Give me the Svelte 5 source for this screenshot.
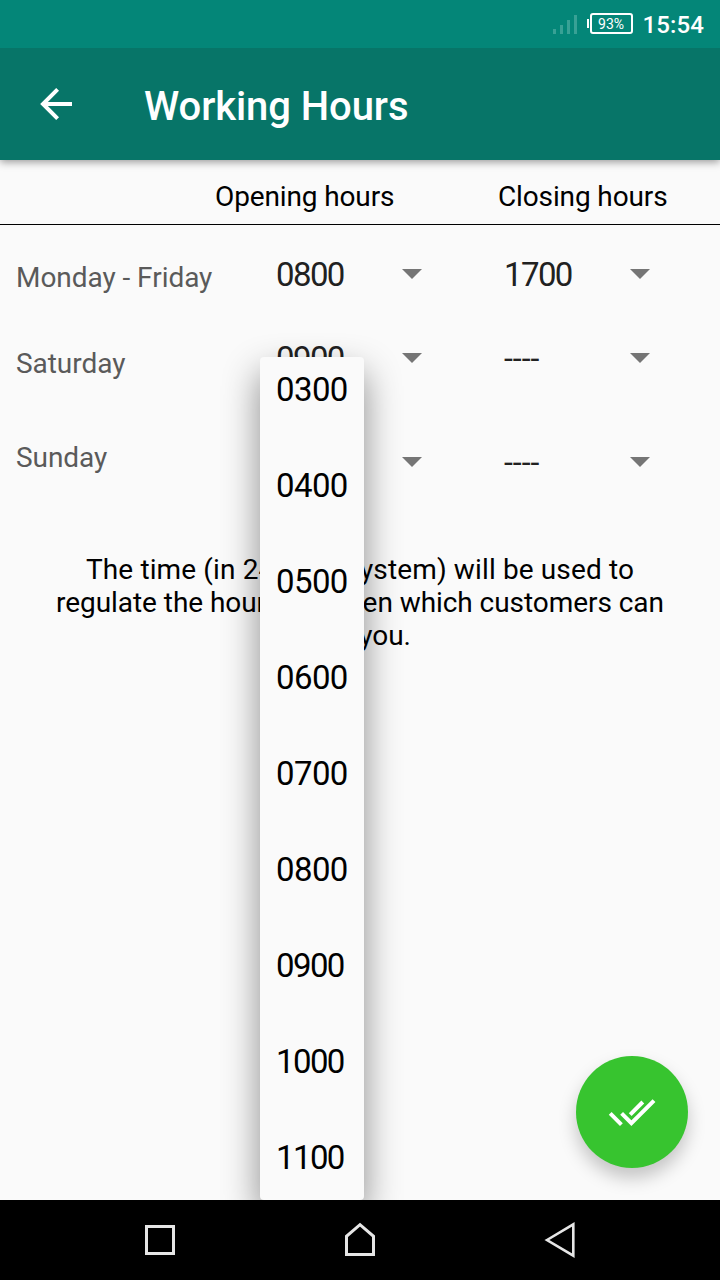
<script>
  const rows = [
    { day: 'Monday - Friday', open: '0800', close: '1700' },
    { day: 'Saturday', open: '0900', close: '----' },
    { day: 'Sunday', open: '----', close: '----' }
  ];
  const options = ['0300', '0400', '0500', '0600', '0700', '0800', '0900', '1000', '1100'];
  const narrow = ['0900', '1000', '1100'];
</script>

{#snippet spinner(value)}
  <div class="spinner">
    <span class="value" class:dashes={value === '----'}>{value}</span>
    <svg width="20" height="10" viewBox="0 0 20 10"><path d="M0 0H20L10 10Z" fill="#757575" /></svg>
  </div>
{/snippet}

<div class="screen">
  <div class="status">
    <svg class="signal" width="26" height="20" viewBox="0 0 26 20" fill="#38a195">
      <path d="M0 14h3v5H0zM7 10h3v9H7zM14 5h3v14h-3zM21 0h3v19h-3z" />
    </svg>
    <div class="battery"><span>93%</span></div>
    <span class="clock">15:54</span>
  </div>
  <header>
    <svg width="32" height="32" viewBox="0 0 32 32" fill="none" stroke="#fff" stroke-width="4">
      <path d="M32 16H3M17.6 1.4L3 16l14.6 14.6" />
    </svg>
    <h1>Working Hours</h1>
  </header>
  <main>
    <div class="heads"><span class="oh">Opening hours</span><span class="ch">Closing hours</span></div>
    <div class="rows">
      {#each rows as row}
        <div class="row">
          <span class="day">{row.day}</span>
          {@render spinner(row.open)}
          {@render spinner(row.close)}
        </div>
      {/each}
    </div>
    <p><span class="wide">The time (in 24 hour system) will be used to</span><br />regulate the hours between which customers can<br />call you.</p>
    <div class="clip">
      <div class="menu">
        {#each options as option}
          <div class="option" class:narrow={narrow.includes(option)}>{option}</div>
        {/each}
      </div>
    </div>
    <button class="fab" aria-label="Save">
      <svg width="48" height="48" viewBox="0 0 24 24" fill="none" stroke="#fff" stroke-width="2">
        <path d="M1.1 12.7l5.6 5.6M6.8 12.7l4.9 4.9L23 6.3M11.1 13.3l6.3-6.3" />
      </svg>
    </button>
  </main>
  <nav>
    <svg width="200" height="80" viewBox="60 1200 200 80"><rect x="146.5" y="1226.5" width="27" height="27" /></svg>
    <svg width="200" height="80" viewBox="260 1200 200 80"><path d="M346.5 1254.5v-18.2l13.5-11.6 13.5 11.6v18.2z" /></svg>
    <svg width="200" height="80" viewBox="460 1200 200 80"><path d="M547 1240l26.3-15.6v31.2z" stroke-width="2.6" /></svg>
  </nav>
</div>

<style>
  :global(body) { margin: 0; }
  .screen {
    width: 720px; height: 1280px; overflow: hidden; display: flex; flex-direction: column;
    background: #fafafa; font-family: Roboto, sans-serif; color: #000;
  }
  .status {
    height: 48px; flex: none; background: #048678; color: #fff; display: flex;
    align-items: center; justify-content: flex-end; padding-right: 16px; box-sizing: border-box;
  }
  .signal { margin-right: 8px; margin-top: 2px; }
  .battery { width: 46px; height: 21px; display: flex; align-items: center; margin-top: -1px; }
  .battery::before { content: ''; width: 2px; height: 9px; background: #fff; margin-right: 1px; }
  .battery span {
    box-sizing: border-box; width: 43px; height: 21px; border: 2px solid #fff; border-radius: 3px;
    font-size: 14px; line-height: 18px; text-align: center;
  }
  .clock { font-size: 24px; font-weight: 500; line-height: 28px; margin-left: 10px; margin-top: 2px; letter-spacing: 0.1px; }
  header {
    height: 112px; flex: none; background: #077568; color: #fff; display: flex; align-items: center;
    padding-left: 40px; box-sizing: border-box; box-shadow: 0 2px 8px rgba(0,0,0,.4); z-index: 1;
    clip-path: inset(0 0 -16px 0);
  }
  h1 { margin: 6px 0 0 72px; font-size: 40px; line-height: 48px; font-weight: 500; letter-spacing: -0.08px; }
  main { height: 1040px; flex: none; position: relative; }
  .heads {
    height: 65px; box-sizing: border-box; border-bottom: 1px solid #000; display: flex;
    font-size: 28px; line-height: 33px; padding: 20px 0 0 215px; letter-spacing: -0.13px;
  }
  .heads .oh { width: 283px; }
  .rows { display: grid; grid-template-rows: 98px 70px 138px; height: 300px; }
  .row { display: grid; grid-template-columns: 260px 228px 228px; align-items: center; font-size: 28px; }
  .day { padding-left: 16px; color: #5a5a5a; line-height: 33px; margin-top: 6px; letter-spacing: -0.05px; }
  .row:nth-child(2) .day { margin-top: 10px; }
  .row:nth-child(3) .day { margin-top: -10px; }
  .spinner { display: flex; align-items: center; padding-left: 16px; font-size: 33px; color: #212121; }
  .value { width: 126px; letter-spacing: -1.6px; line-height: 38px; padding-top: 2px; }
  .value.dashes { font-size: 32px; letter-spacing: 0; padding-top: 0; }
  p { margin: 28px 0 0; text-align: center; font-size: 28px; line-height: 33px; letter-spacing: -0.06px; }
  .wide { letter-spacing: 0.13px; }
  .clip { position: absolute; inset: 0; overflow: hidden; pointer-events: none; }
  .menu {
    position: absolute; left: 260px; top: 197px; width: 104px; height: 843px; box-sizing: border-box;
    background: #fafafa; border-radius: 4px; box-shadow: 0 16px 36px rgba(0,0,0,.45);
  }
  .option { height: 96px; line-height: 64px; padding: 1px 0 0 16px; font-size: 33px; letter-spacing: -0.6px; box-sizing: border-box; }
  .narrow { letter-spacing: -1.6px; }
  .fab {
    position: absolute; left: 576px; top: 896px; width: 112px; height: 112px; border: 0; padding: 0;
    border-radius: 50%; background: #37c42f; display: flex; align-items: center; justify-content: center;
    box-shadow: 0 10px 18px rgba(0,0,0,.22);
  }
  nav { height: 80px; flex: none; background: #000; display: flex; justify-content: center; }
  nav svg { fill: none; stroke: #e6e6e6; stroke-width: 3; }
</style>
